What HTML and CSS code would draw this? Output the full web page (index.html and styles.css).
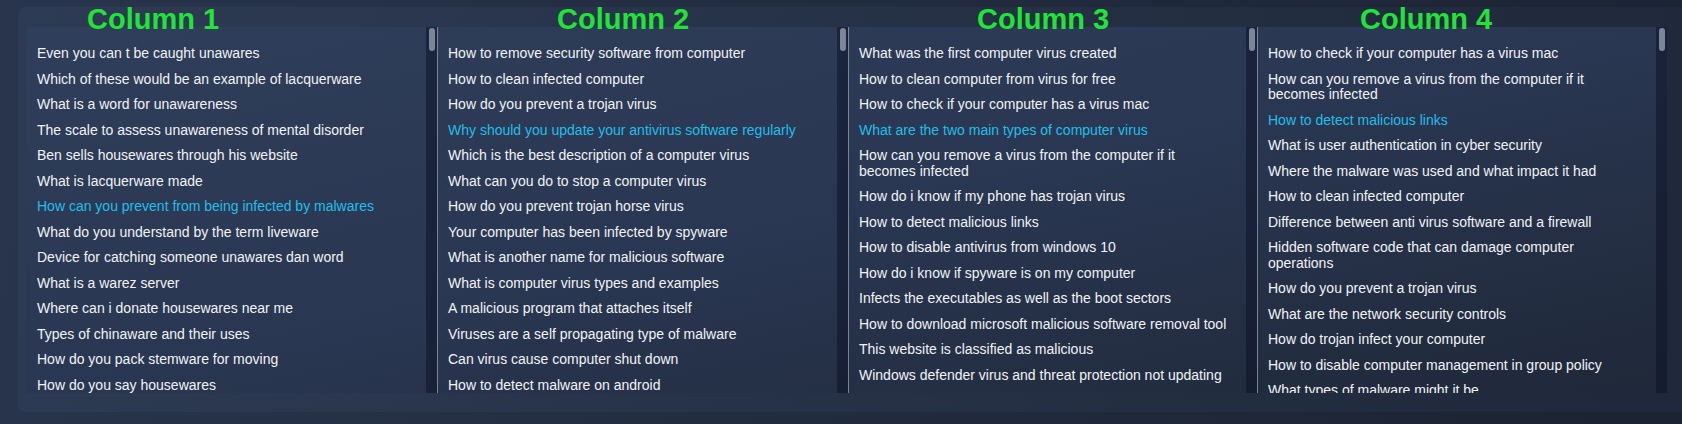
FILE: index.html
```html
<!DOCTYPE html>
<html>
  <head>
    <title>Related Searches</title>
    <meta charset="UTF-8">
    <link rel="stylesheet" href="styles.css">
  </head>
  <body>
    <div id="panel">
      <div class="heads">
        <h2>Column 1</h2>
        <h2>Column 2</h2>
        <h2>Column 3</h2>
        <h2>Column 4</h2>
      </div>
      <div class="cols">
        <div class="col">
          <ul class="list">
            <li>Even you can t be caught unawares</li>
            <li>Which of these would be an example of lacquerware</li>
            <li>What is a word for unawareness</li>
            <li>The scale to assess unawareness of mental disorder</li>
            <li>Ben sells housewares through his website</li>
            <li>What is lacquerware made</li>
            <li class="hot">How can you prevent from being infected by malwares</li>
            <li>What do you understand by the term liveware</li>
            <li>Device for catching someone unawares dan word</li>
            <li>What is a warez server</li>
            <li>Where can i donate housewares near me</li>
            <li>Types of chinaware and their uses</li>
            <li>How do you pack stemware for moving</li>
            <li>How do you say housewares</li>
          </ul>
          <div class="bar"><div class="thumb"></div></div>
        </div>
        <div class="col">
          <ul class="list">
            <li>How to remove security software from computer</li>
            <li>How to clean infected computer</li>
            <li>How do you prevent a trojan virus</li>
            <li class="hot">Why should you update your antivirus software regularly</li>
            <li>Which is the best description of a computer virus</li>
            <li>What can you do to stop a computer virus</li>
            <li>How do you prevent trojan horse virus</li>
            <li>Your computer has been infected by spyware</li>
            <li>What is another name for malicious software</li>
            <li>What is computer virus types and examples</li>
            <li>A malicious program that attaches itself</li>
            <li>Viruses are a self propagating type of malware</li>
            <li>Can virus cause computer shut down</li>
            <li>How to detect malware on android</li>
          </ul>
          <div class="bar"><div class="thumb"></div></div>
        </div>
        <div class="col">
          <ul class="list">
            <li>What was the first computer virus created</li>
            <li>How to clean computer from virus for free</li>
            <li>How to check if your computer has a virus mac</li>
            <li class="hot">What are the two main types of computer virus</li>
            <li>How can you remove a virus from the computer if it becomes infected</li>
            <li>How do i know if my phone has trojan virus</li>
            <li>How to detect malicious links</li>
            <li>How to disable antivirus from windows 10</li>
            <li>How do i know if spyware is on my computer</li>
            <li>Infects the executables as well as the boot sectors</li>
            <li>How to download microsoft malicious software removal tool</li>
            <li>This website is classified as malicious</li>
            <li>Windows defender virus and threat protection not updating</li>
          </ul>
          <div class="bar"><div class="thumb"></div></div>
        </div>
        <div class="col">
          <ul class="list">
            <li>How to check if your computer has a virus mac</li>
            <li>How can you remove a virus from the computer if it becomes infected</li>
            <li class="hot">How to detect malicious links</li>
            <li>What is user authentication in cyber security</li>
            <li>Where the malware was used and what impact it had</li>
            <li>How to clean infected computer</li>
            <li>Difference between anti virus software and a firewall</li>
            <li>Hidden software code that can damage computer operations</li>
            <li>How do you prevent a trojan virus</li>
            <li>What are the network security controls</li>
            <li>How do trojan infect your computer</li>
            <li>How to disable computer management in group policy</li>
            <li>What types of malware might it be</li>
          </ul>
          <div class="bar"><div class="thumb"></div></div>
        </div>
      </div>
    </div>
  </body>
</html>
```

FILE: styles.css
```css
body
{
  margin: 0;
  height: 424px;
  overflow: hidden;
  background: linear-gradient(100deg, #28354c, #1c2332);
  font-family: "Liberation Sans", Arial, sans-serif;
}
#panel
{
  margin: 7px -12px 0 18px;
  padding: 0 0 19px 8px;
  border-radius: 8px;
  background: linear-gradient(100deg, #2d3b54, #1f2839);
}
.heads, .cols
{
  display: grid;
  grid-template-columns: 411px 411px 409px 410px;
}
.heads {height: 20px; position: relative; z-index: 1;}
h2
{
  margin: 0;
  font-size: 29px;
  line-height: 24px;
  font-weight: bold;
  color: #22e337;
  white-space: nowrap;
}
.heads h2:nth-child(1) {padding-left: 61px;}
.heads h2:nth-child(2) {padding-left: 120px;}
.heads h2:nth-child(3) {padding-left: 129px;}
.heads h2:nth-child(4) {padding-left: 103px;}
.cols
{
  grid-template-rows: 366px;
  height: 366px;
  width: 1641px;
  background: linear-gradient(to bottom right, #2f3e5a, #2a3752 50%, #1f2838);
}
.col
{
  display: flex;
  min-width: 0;
  min-height: 0;
  overflow: hidden;
  border-left: 1px solid #7a8497;
}
.col:first-child {border-left-color: transparent;}
.list
{
  flex: 1;
  margin: 0;
  padding: 14px 17px 0 10px;
  list-style: none;
  overflow: hidden;
}
.list li
{
  padding: 5px 0;
  font-size: 14px;
  line-height: 15.5px;
  color: #f1f3f6;
}
.list li.hot {color: #20bfea;}
.bar
{
  width: 11px;
  flex: none;
  background: rgba(12, 18, 40, 0.55);
}
.thumb
{
  margin: 1px 0 0 3px;
  width: 6px;
  height: 23px;
  border-radius: 3px;
  background: #7d8699;
}
```
